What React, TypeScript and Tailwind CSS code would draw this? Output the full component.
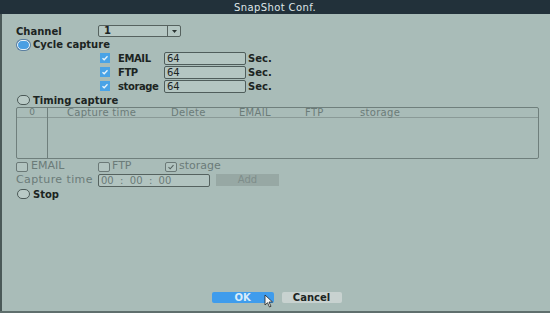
import React from 'react';

const font = { fontFamily: '"DejaVu Sans", Verdana, sans-serif' };

function Radio({ on }: { on?: boolean }) {
  return (
    <span
      className={
        on
          ? 'inline-block w-[13px] h-[10px] rounded-full border border-[#e8f2f7] bg-[#4a9fe3] shadow-[0_0_0_1px_#5b7fa0]'
          : 'inline-block w-[13px] h-[10px] rounded-full border border-[#4c5a58] bg-[#b9cac6]'
      }
    />
  );
}

function BlueCheck() {
  return (
    <span className="inline-flex w-[10px] h-[10px] items-center justify-center bg-[#4aa3e6]">
      <svg width="8" height="8" viewBox="0 0 8 8">
        <path d="M1.5 4.2 L3.2 5.8 L6.5 2.2" stroke="#e9f4fb" strokeWidth="1.3" fill="none" />
      </svg>
    </span>
  );
}

function GrayCheck({ on }: { on?: boolean }) {
  return (
    <span className="inline-flex w-[12px] h-[10px] items-center justify-center rounded-[2px] border border-[#6b7977] bg-[#b2c4c0]">
      {on && (
        <svg width="8" height="8" viewBox="0 0 8 8">
          <path d="M1.5 4.2 L3.2 5.8 L6.5 2.2" stroke="#55625f" strokeWidth="1.1" fill="none" />
        </svg>
      )}
    </span>
  );
}

function CycleRow({ label, value }: { label: string; value: string }) {
  return (
    <div className="flex items-center h-[14px]">
      <div className="w-[84px]" />
      <BlueCheck />
      <span className="ml-[8px] w-[46px] text-[10px] font-bold text-[#1c2422] tracking-[-0.4px]">{label}</span>
      <div className="w-[82px] h-[13px] rounded-[2px] border border-[#4f5d5b] bg-[#b4c6c2] pl-[2px] text-[10px] leading-[11px] text-[#1c2422]">
        {value}
      </div>
      <span className="ml-[2px] text-[10px] font-bold text-[#1c2422]">Sec.</span>
    </div>
  );
}

export default function App() {
  return (
    <div className="w-[550px] h-[313px] overflow-hidden bg-[#a9bcb8] relative" style={font}>
      <div className="h-[14px] bg-[#22313a] flex items-center justify-center text-[10px] text-[#dfe6e8] tracking-[0.4px]">
        SnapShot Conf.
      </div>
      <div className="h-[297px] border-l-2 border-[#4a5958] flex flex-col pl-[14px] pr-[11px]">
        <div className="flex items-center h-[14px] mt-[10px]">
          <span className="w-[82px] text-[10px] font-bold text-[#1c2422]">Channel</span>
          <div className="flex w-[83px] h-[12px] border border-[#56625f] rounded-[2px] bg-[#b5c7c3]">
            <span className="flex-1 pl-[5px] text-[10px] leading-[10px] text-[#1c2422] font-bold">1</span>
            <span className="w-[13px] border-l border-[#56625f] flex items-center justify-center">
              <svg width="5" height="3" viewBox="0 0 5 3">
                <path d="M0 0 L5 0 L2.5 3 Z" fill="#2a3432" />
              </svg>
            </span>
          </div>
        </div>
        <div className="flex items-center h-[13px] pl-[1px]">
          <Radio on />
          <span className="ml-[3px] text-[10px] font-bold text-[#1c2422]">Cycle capture</span>
        </div>
        <CycleRow label="EMAIL" value="64" />
        <CycleRow label="FTP" value="64" />
        <CycleRow label="storage" value="64" />
        <div className="flex items-center h-[14px] pl-[1px]">
          <Radio />
          <span className="ml-[3px] text-[10px] font-bold text-[#1c2422]">Timing capture</span>
        </div>
        <div className="h-[52px] border border-[#6f7f7c] rounded-[2px] flex">
          <div className="w-[31px] border-r border-[#6f7f7c] flex flex-col">
            <div className="h-[10px] border-b border-[#8a9a97] text-center text-[9px] leading-[9px] text-[#6b7b78]">0</div>
          </div>
          <div className="flex-1 flex flex-col">
            <div className="h-[10px] border-b border-[#8a9a97] relative text-[10px] leading-[9px] text-[#6b7b78] tracking-[0.3px]">
              <span className="absolute left-[19px]">Capture time</span>
              <span className="absolute left-[123px]">Delete</span>
              <span className="absolute left-[191px]">EMAIL</span>
              <span className="absolute left-[257px]">FTP</span>
              <span className="absolute left-[312px]">storage</span>
            </div>
          </div>
        </div>
        <div className="flex items-center h-[13px] mt-[1px] text-[11px] text-[#6b7b78]">
          <span className="flex items-center w-[82px]">
            <GrayCheck />
            <span className="ml-[3px]">EMAIL</span>
          </span>
          <span className="flex items-center w-[67px]">
            <GrayCheck />
            <span className="ml-[2px]">FTP</span>
          </span>
          <span className="flex items-center">
            <GrayCheck on />
            <span className="ml-[2px]">storage</span>
          </span>
        </div>
        <div className="flex items-center h-[14px] text-[11px] text-[#6b7b78]">
          <span className="w-[82px] tracking-[0.4px]">Capture time</span>
          <div className="w-[112px] h-[13px] border border-[#55625f] rounded-[2px] bg-[#b2c4c0] pl-[2px] text-[10px] leading-[11px] whitespace-pre">
            00  :  00  :  00
          </div>
          <div className="ml-[6px] w-[63px] h-[12px] bg-[#97a8a4] text-center text-[10px] leading-[12px] text-[#7e8d8a]">Add</div>
        </div>
        <div className="flex items-center h-[14px] pl-[1px]">
          <Radio />
          <span className="ml-[3px] text-[10px] font-bold text-[#1c2422]">Stop</span>
        </div>
        <div className="mt-auto mb-[8px] flex justify-center gap-[8px] pr-[2px]">
          <div className="w-[62px] h-[11px] rounded-[2px] bg-[#3f9cec] text-center text-[10px] leading-[11px] text-[#d8ecfb] font-bold">
            OK
          </div>
          <div className="w-[60px] h-[11px] rounded-[2px] bg-[#c8d2d0] text-center text-[10px] leading-[11px] text-[#1c2422] font-bold">
            Cancel
          </div>
        </div>
      </div>
      <div className="absolute left-0 right-0 bottom-0 h-[2px] bg-[#5f6f6d]" />
      <svg className="absolute left-[264px] top-[294px]" width="10" height="14" viewBox="0 0 10 14">
        <path d="M1 1 L1 11 L3.5 8.7 L5.5 13 L7 12.3 L5 8 L8.5 8 Z" fill="#f4f6f6" stroke="#222" strokeWidth="0.8" />
      </svg>
    </div>
  );
}
